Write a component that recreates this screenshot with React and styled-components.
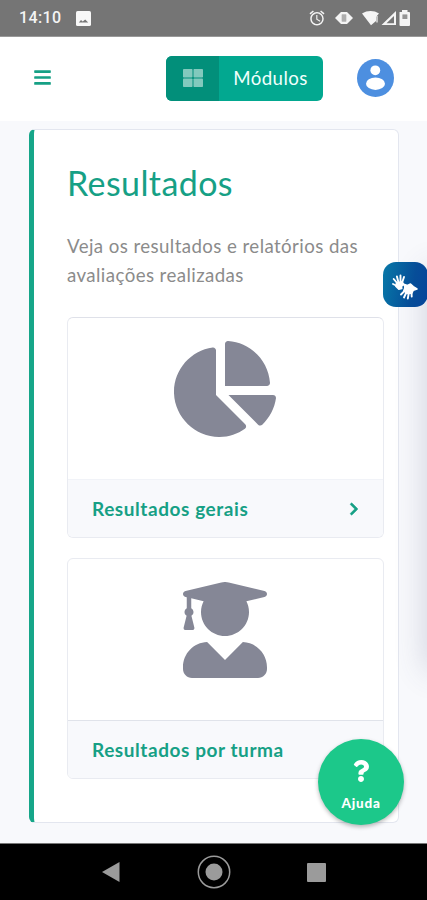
import React from 'react';
import styled, { createGlobalStyle } from 'styled-components';
import { FaBars, FaChartPie, FaUserGraduate, FaChevronRight, FaQuestion } from 'react-icons/fa';
import { MdAlarm } from 'react-icons/md';

const GlobalStyle = createGlobalStyle`
  *, *::before, *::after { box-sizing: border-box; }
  body { margin: 0; background: #f8f9fc; }
  h1, h2, p { margin: 0; }
  button { border: 0; padding: 0; background: none; font: inherit; color: inherit; }
  svg { display: block; flex: none; }
`;

const Screen = styled.div`
  position: relative;
  display: flex;
  flex-direction: column;
  width: 427px;
  height: 900px;
  overflow: hidden;
  background: #f8f9fc;
  font-family: Lato, "Noto Sans", sans-serif;
`;

const StatusBar = styled.div`
  display: flex;
  align-items: center;
  justify-content: space-between;
  height: 37px;
  padding: 0 17px 0 19px;
  border-bottom: 1px solid #999;
  background: #757575;
  color: #f4f4f4;
`;

const StatusGroup = styled.div`
  display: flex;
  align-items: center;
  gap: ${(p) => p.$gap || '0'};
`;

const Clock = styled.span`
  width: 57px;
  font: 500 16px/20px Roboto, sans-serif;
  letter-spacing: 0.35px;
`;

const Header = styled.header`
  display: flex;
  align-items: center;
  height: 84px;
  padding: 0 33px 2px 33px;
  background: #fff;
`;

const MenuButton = styled.button`
  color: #16a085;
  margin-right: auto;
  padding-bottom: 1px;
`;

const ModulesButton = styled.button`
  display: flex;
  width: 157px;
  height: 45px;
  margin-right: 34px;
  border-radius: 6px;
  overflow: hidden;
  background: #02a890;
  color: #f0fffc;
`;

const ModulesIcon = styled.span`
  display: grid;
  place-items: center;
  width: 53px;
  height: 100%;
  background: #028f7a;
`;

const ModulesLabel = styled.span`
  flex: 1;
  padding-right: 1px;
  text-align: center;
  font-size: 18.7px;
  line-height: 45px;
  letter-spacing: 0.4px;
`;

const Main = styled.main`
  flex: 1;
  padding: 8px 28px 0 29px;
`;

const Panel = styled.section`
  height: 694px;
  padding: 33px 15px 0 33px;
  border: 1px solid #e3e6ef;
  border-left: 5px solid #16a689;
  border-radius: 6px;
  background: #fff;
`;

const Title = styled.h1`
  color: #16a085;
  font-size: 34px;
  font-weight: 400;
  line-height: 40px;
  letter-spacing: 0.4px;
`;

const Description = styled.p`
  margin: 29px 0 28px;
  color: #8b8b8b;
  font-size: 18.7px;
  line-height: 28.5px;
  letter-spacing: 0.41px;
  white-space: nowrap;
`;

const Card = styled.article`
  display: flex;
  flex-direction: column;
  width: 317px;
  height: 221px;
  margin-bottom: 20px;
  border: 1px solid #e9ebf1;
  border-top-color: ${(p) => (p.$strong ? '#dfe1e9' : '#e9ebf1')};
  border-radius: 6px;
  overflow: hidden;
`;

const CardArt = styled.div`
  display: flex;
  justify-content: center;
  height: 161px;
  padding: 23px 1px 0 0;
  color: #858796;
`;

const PieIcon = styled(FaChartPie)`
  width: 102px;
  height: 96px;
`;

const GraduateIcon = styled(FaUserGraduate)`
  width: 84px;
  height: 96px;
`;

const CardFooter = styled.div`
  display: flex;
  flex: 1;
  align-items: center;
  justify-content: space-between;
  padding: 0 22px 0 24px;
  border-top: 1px solid ${(p) => (p.$strong ? '#f1f3f8' : '#e0e3ea')};
  background: #f8f9fc;
  color: #16a085;
`;

const CardTitle = styled.h2`
  font-size: 19px;
  font-weight: 700;
  line-height: 24px;
  letter-spacing: 0.57px;
`;

const SideShade = styled.div`
  position: absolute;
  top: 270px;
  right: -30px;
  width: 30px;
  height: 400px;
  box-shadow: 0 0 32px rgba(70, 75, 115, 0.24);
`;

const SignButton = styled.button`
  position: absolute;
  top: 262px;
  left: 383px;
  width: 45px;
  height: 45px;
  border-radius: 13px;
  background: linear-gradient(100deg, #0879a8, #064d98 65%, #06449b);
  color: #fff;
`;

const HelpButton = styled.button`
  position: absolute;
  top: 739px;
  left: 318px;
  display: flex;
  flex-direction: column;
  align-items: center;
  width: 86px;
  height: 86px;
  padding-top: 21px;
  border-radius: 50%;
  background: #1cc88a;
  box-shadow: 0 2px 4px rgba(0, 0, 0, 0.28);
  color: #fff;
`;

const HelpLabel = styled.span`
  margin-top: 12px;
  font-size: 13.5px;
  font-weight: 900;
  line-height: 18px;
  letter-spacing: 0.8px;
`;

const NavigationBar = styled.nav`
  display: flex;
  align-items: center;
  justify-content: space-between;
  height: 57px;
  padding: 0 101px;
  border-top: 1px solid #777;
  background: #000;
  color: #9b9b9b;
`;

const PhotoIcon = () => (
  <svg width="15" height="15" viewBox="0 0 15 15">
    <rect width="15" height="15" rx="1.6" fill="#f8f8f8" />
    <path d="M2.8 11.5 5 9l1.7 1.5L9.2 8.500l3 3Z" fill="#777" />
  </svg>
);

const VibrationIcon = () => (
  <svg width="18" height="16" viewBox="0 0 18 16" fill="currentColor">
    <path d="M0 8 4 4v8ZM18 8l-4-4v8Z" />
    <path d="M6 2h6l2 2v8l-2 2H6l-2-2V4Zm.8 2.5v7h4.4v-7Z" fillRule="evenodd" />
    <rect x="6.8" y="4.5" width="4.4" height="7" opacity=".45" />
  </svg>
);

const SignalIcons = () => (
  <svg width="48" height="18" viewBox="0 0 48 18" fill="currentColor">
    <path d="M0 4.5C5.2 1.2 12 1.2 17 4.5L14 8v4L9 16.3Z" />
    <path d="M15 7v6.5" stroke="currentColor" strokeWidth="2" opacity=".6" />
    <path d="M19.5 16 34 2v14ZM24.5 14.200h7.500V7Z" fillRule="evenodd" />
    <path d="M38 3h2V1h5.5v2H47a1 1 0 0 1 1 1v12a1 1 0 0 1-1 1h-8.5a1 1 0 0 1-1-1V3Zm2.5 2.5V10h4.8V5.5Z" fillRule="evenodd" />
    <rect x="40.5" y="5.5" width="4.8" height="4.5" opacity=".25" />
  </svg>
);

const GridIcon = () => (
  <svg width="20" height="18" viewBox="0 0 20 18" fill="#82c9bd">
    <rect width="9.5" height="8.5" rx=".8" />
    <rect x="10.5" width="9.5" height="8.5" rx=".8" />
    <rect y="9.5" width="9.5" height="8.5" rx=".8" />
    <rect x="10.5" y="9.5" width="9.5" height="8.5" rx=".8" />
  </svg>
);

const Avatar = () => (
  <svg width="37" height="38" viewBox="0 0 37 38">
    <ellipse cx="18.5" cy="19" rx="18.5" ry="19" fill="#4d8fe0" />
    <circle cx="18.3" cy="11.3" r="4.9" fill="#fff" />
    <ellipse cx="18.5" cy="24.7" rx="9.5" ry="6.2" fill="#fff" />
  </svg>
);

const HandsIcon = () => (
  <svg width="45" height="45" viewBox="0.5 1.5 45 45" fill="none" stroke="currentColor" strokeLinecap="round" strokeLinejoin="round">
    <path d="m15 23-3.8-4.5M16 22l-1.6-6M18 22v-7M19.5 22.5l2-6M14.5 25.5l-4-2" strokeWidth="1.9" />
    <path d="m14 22.5 5.5-1 2 2.5-2.500 1.500.3 2.500-3 .8-3-3Z" fill="currentColor" strokeWidth="1.500" />
    <path d="m22 24 3 1 3-1.500 2.800 2.600 3.700 2.400-3.700 1.200-1.500 3-5 .3-3-3 1-2.500Z" fill="currentColor" strokeWidth="1.500" />
    <path d="m22.500 30-4 4M24 31.500 21.500 37M26.500 31.500l-1.200 6.500M29 31.500l.2 4.500" strokeWidth="1.900" />
  </svg>
);

export default function App() {
  return (
    <>
      <GlobalStyle />
      <Screen>
        <StatusBar>
          <StatusGroup>
            <Clock>14:10</Clock>
            <PhotoIcon />
          </StatusGroup>
          <StatusGroup $gap="9px">
            <MdAlarm size={18} />
            <VibrationIcon />
            <SignalIcons />
          </StatusGroup>
        </StatusBar>
        <Header>
          <MenuButton aria-label="Menu"><FaBars size={19} /></MenuButton>
          <ModulesButton>
            <ModulesIcon><GridIcon /></ModulesIcon>
            <ModulesLabel>Módulos</ModulesLabel>
          </ModulesButton>
          <Avatar />
        </Header>
        <Main>
          <Panel>
            <Title>Resultados</Title>
            <Description>
              Veja os resultados e relatórios das<br />avaliações realizadas
            </Description>
            <Card $strong>
              <CardArt><PieIcon /></CardArt>
              <CardFooter $strong>
                <CardTitle>Resultados gerais</CardTitle>
                <FaChevronRight size={14} stroke="currentColor" strokeWidth={24} />
              </CardFooter>
            </Card>
            <Card>
              <CardArt><GraduateIcon /></CardArt>
              <CardFooter>
                <CardTitle>Resultados por turma</CardTitle>
                <FaChevronRight size={14} stroke="currentColor" strokeWidth={24} />
              </CardFooter>
            </Card>
          </Panel>
        </Main>
        <NavigationBar>
          <svg width="19" height="20" viewBox="0 0 19 20" fill="currentColor"><path d="M18.5 0v20L1 10Z" /></svg>
          <svg width="34" height="34" viewBox="0 0 34 34" fill="currentColor">
            <circle cx="17" cy="17" r="15.7" fill="none" stroke="currentColor" strokeWidth="1.5" />
            <circle cx="17" cy="17" r="8.5" />
          </svg>
          <svg width="19" height="19" viewBox="0 0 19 19" fill="currentColor"><rect width="19" height="19" rx="1" /></svg>
        </NavigationBar>
        <SideShade />
        <SignButton aria-label="Libras"><HandsIcon /></SignButton>
        <HelpButton>
          <FaQuestion size={22} />
          <HelpLabel>Ajuda</HelpLabel>
        </HelpButton>
      </Screen>
    </>
  );
}
